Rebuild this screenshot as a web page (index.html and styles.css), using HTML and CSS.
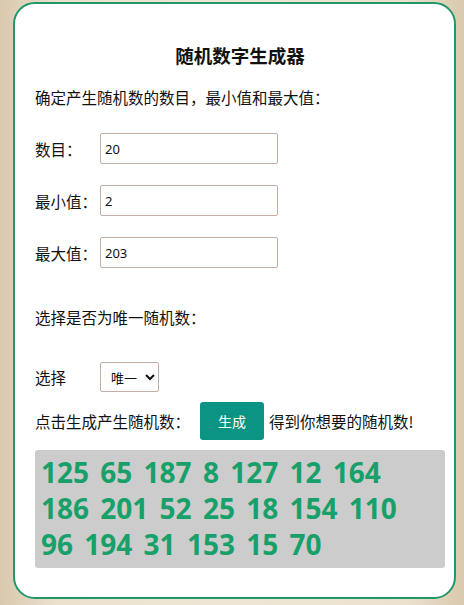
FILE: index.html
```html
<!DOCTYPE html>
<html lang="zh-CN">
<head>
  <meta charset="UTF-8">
  <meta name="viewport" content="width=device-width, initial-scale=1.0">
  <title>随机数字生成器</title>
  <link rel="stylesheet" href="styles.css">
</head>
<body>

<div class="card">
  <h2>随机数字生成器</h2>
  <p class="intro">确定产生随机数的数目，最小值和最大值：</p>

  <div class="row first">
    <label for="count">数目：</label>
    <input id="count" type="text" value="20">
  </div>
  <div class="row">
    <label for="min">最小值：</label>
    <input id="min" type="text" value="2">
  </div>
  <div class="row">
    <label for="max">最大值：</label>
    <input id="max" type="text" value="203">
  </div>

  <p class="question">选择是否为唯一随机数：</p>

  <div class="row select-row">
    <label for="unique">选择</label>
    <select id="unique">
      <option>唯一</option>
      <option>不唯一</option>
    </select>
  </div>

  <div class="action">
    <span class="hint">点击生成产生随机数：</span>
    <button>生成</button>
    <span>得到你想要的随机数!</span>
  </div>

  <div class="result">125 65 187 8 127 12 164 186 201 52 25 18 154 110 96 194 31 153 15 70</div>
</div>

</body>
</html>
```
FILE: styles.css
```css
body {
  margin: 0;
  font-family: "Noto Sans CJK SC", "Noto Sans", sans-serif;
  background: linear-gradient(90deg, #d9c8ae 0%, #ebe1cd 12%, #eee6d4 50%, #ebe1cd 88%, #d9c8ae 100%);
  height: 605px;
  overflow: hidden;
}

.card {
  margin: 2px 8px 0 13px;
  height: 597px;
  box-sizing: border-box;
  background-color: white;
  border: 2px solid #22976a;
  border-radius: 22px;
  padding: 38px 9px 0 20px;
  color: #111;
  font-size: 15.5px;
}

h2 {
  margin: 0;
  font-size: 18.5px;
  line-height: 26px;
  text-align: center;
  color: #111;
}

.intro {
  margin: 18px 0 0;
  line-height: 22px;
}

.row {
  display: flex;
  align-items: center;
  margin-top: 21px;
}

.row.first {
  margin-top: 25px;
}

.row label {
  width: 65px;
}

.row input {
  width: 178px;
  height: 31px;
  box-sizing: border-box;
  border: 1px solid #c3aea4;
  border-radius: 2px;
  padding: 0 4px;
  font-family: "Noto Sans", sans-serif;
  font-size: 13px;
  color: #111;
}

.question {
  margin: 38px 0 0;
  line-height: 22px;
}

.row.select-row {
  margin-top: 34px;
}

.select-row select {
  width: 59px;
  height: 30px;
  border: 1px solid #c3aea4;
  border-radius: 2px;
  background-color: white;
  font-family: "Noto Sans CJK SC", sans-serif;
  font-size: 13px;
  color: #111;
  padding: 0 2px 0 6px;
}

.action {
  display: flex;
  align-items: center;
  margin-top: 10px;
}

.action .hint {
  width: 165px;
}

.action button {
  width: 64px;
  height: 38px;
  margin: 0 5px 0 0;
  background-color: #0b9484;
  color: white;
  border: none;
  border-radius: 3px;
  font-family: "Noto Sans CJK SC", sans-serif;
  font-size: 14px;
}

.result {
  margin-top: 10px;
  width: 410px;
  box-sizing: border-box;
  background-color: #cccccc;
  border-radius: 3px;
  padding: 4px 6px 6px;
  font-family: "Open Sans", "Noto Sans", sans-serif;
  font-weight: bold;
  font-size: 28px;
  line-height: 36px;
  word-spacing: 4px;
  color: #17a06a;
}
```
